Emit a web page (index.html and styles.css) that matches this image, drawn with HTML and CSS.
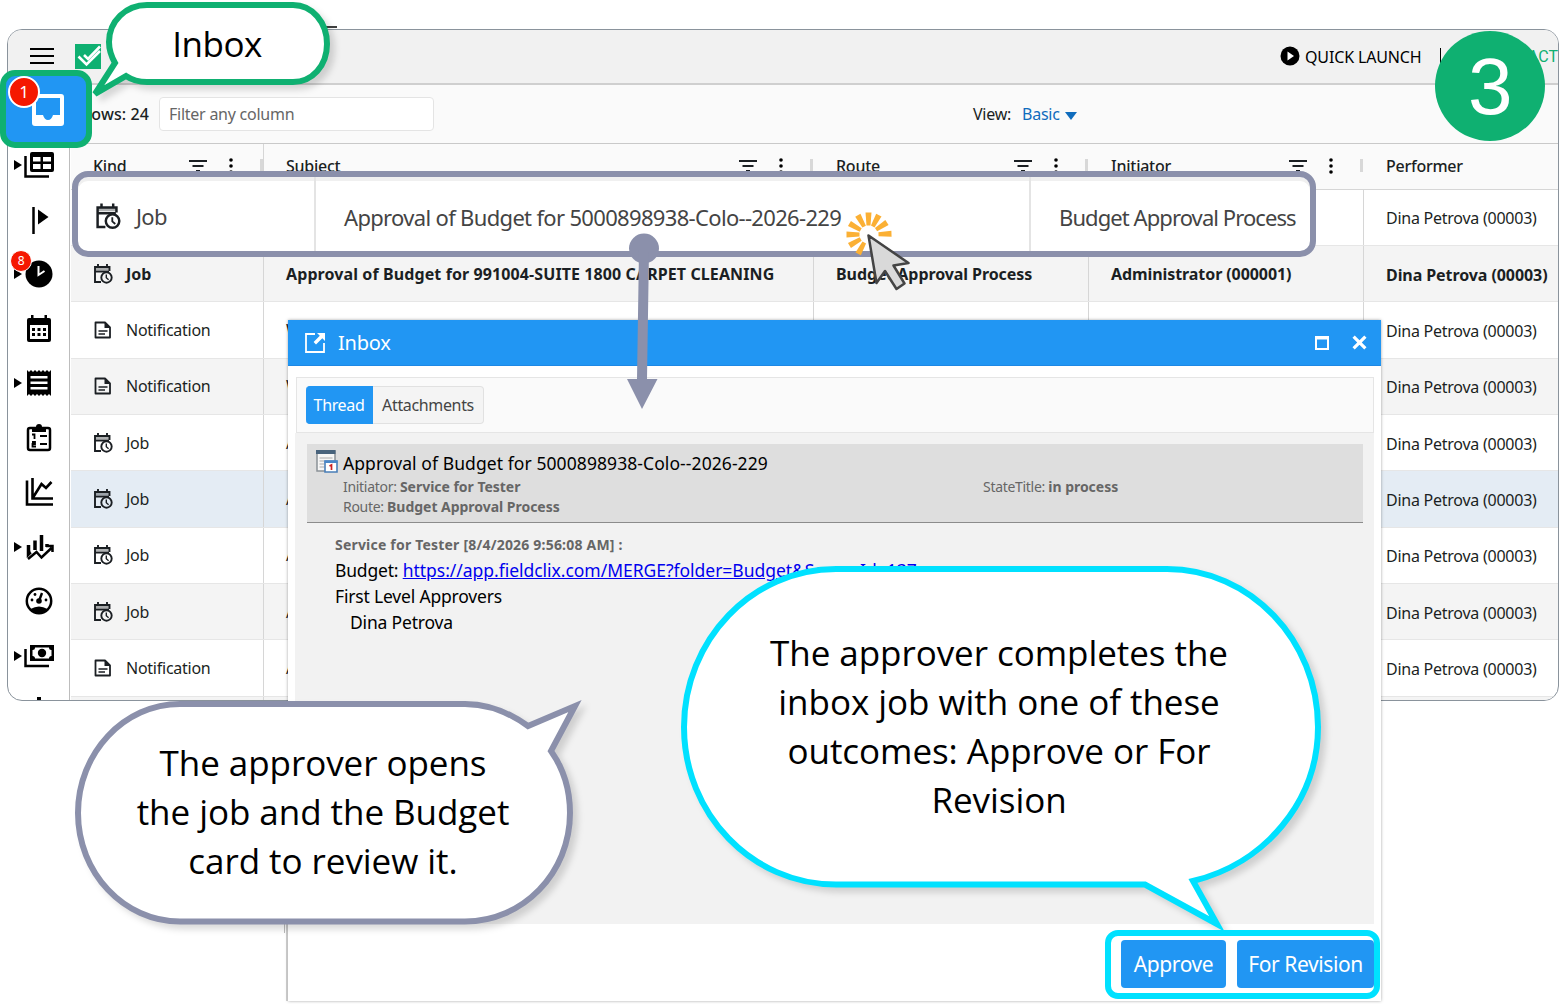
FILE: index.html
```html
<!DOCTYPE html>
<html lang="en">
<head>
    <meta charset="UTF-8">
    <meta name="viewport" content="width=device-width, initial-scale=1.0">
    <title>Inbox</title>
    <link rel="stylesheet" href="styles.css">
</head>
<body>
    <svg class="defs" width="0" height="0">
        <symbol id="i-job" viewBox="0 0 20 22">
            <path d="M8 19H2V4h14.500v4M2 8.500h14M5 1v3M14 1v3" fill="none" stroke="currentColor" stroke-width="1.900"/>
            <path d="M2 4h14.500v3H2z" fill="currentColor" opacity=".35"/>
            <circle cx="13.500" cy="14.500" r="5.200" fill="none" stroke="currentColor" stroke-width="1.900"/>
            <path d="M13.300 11.500v3.300l2.300 2" fill="none" stroke="currentColor" stroke-width="1.400"/>
        </symbol>
        <symbol id="i-note" viewBox="0 0 20 20">
            <path d="M2.500 2.500h9.500l5 5v10H2.500z" fill="none" stroke="currentColor" stroke-width="1.800" stroke-linejoin="round"/>
            <path d="M11.500 2v6H17z" fill="currentColor"/>
            <path d="M5.500 11h9M5.500 14h6.500" stroke="currentColor" stroke-width="1.500"/>
        </symbol>
        <symbol id="i-filter" viewBox="0 0 18 12">
            <path d="M0 1h18M3.500 6h11M7 11h4" stroke="currentColor" stroke-width="1.800"/>
        </symbol>
        <symbol id="i-dots" viewBox="0 0 4 16">
            <circle cx="2" cy="2" r="1.800"/><circle cx="2" cy="8" r="1.800"/><circle cx="2" cy="14" r="1.800"/>
        </symbol>
    </svg>

    <div class="app">
        <header class="topbar">
            <svg class="menu" viewBox="0 0 24 18"><path d="M0 2h24M0 9h24M0 16h24" stroke="#000" stroke-width="2.200"/></svg>
            <svg class="logo" viewBox="0 0 26 25"><path d="M0 0h26v25H0z" fill="#0fb071"/><path d="M3.500 12.500l8 8L25 7M9 11l4 4L25 2.500" fill="none" stroke="#fff" stroke-width="2.600"/></svg>
            <div class="quick">
                <svg viewBox="0 0 20 20"><circle cx="10" cy="10" r="9.500"/><path d="M7.500 5.500L14 10l-6.500 4.500z" fill="#fff"/></svg>
                <span>QUICK LAUNCH</span>
            </div>
            <div class="contact">CONTACT</div>
        </header>
        <div class="main">
            <nav class="sidebar">
                <div class="item inbox"></div>
                <div class="item has-sub"><svg viewBox="0 0 30 30"><path d="M1.500 6v20.500H25" fill="none" stroke="#000" stroke-width="2.500"/><path fill-rule="evenodd" d="M8 2h20a2 2 0 012 2v16a2 2 0 01-2 2H8a2 2 0 01-2-2V4a2 2 0 012-2zM9 7v4.500h7.500V7zM19 7v4.500h8V7zM9 14v5h7.500v-5zM19 14v5h8v-5z"/></svg></div>
                <div class="item"><svg viewBox="0 0 30 30"><path d="M9.500 2v27" stroke="#000" stroke-width="2.500"/><path d="M14 4.500l10.500 7.500L14 19.500z"/></svg></div>
                <div class="item has-sub"><svg viewBox="0 0 30 30"><circle cx="15" cy="15" r="13.500"/><path d="M14.500 7v9l6-4" fill="none" stroke="#fff" stroke-width="2"/></svg><b class="count">8</b></div>
                <div class="item"><svg viewBox="0 0 30 30"><path fill-rule="evenodd" d="M5 4h2V1h2.500v3h11V1H23v3h2a2 2 0 012 2v20a2 2 0 01-2 2H5a2 2 0 01-2-2V6a2 2 0 012-2zM6 11v14h18V11z"/><path d="M8 15.500h3m2.500 0h3m2.500 0h3M8 20.500h3m2.500 0h3m2.500 0h3" stroke="#000" stroke-width="3"/></svg></div>
                <div class="item has-sub"><svg viewBox="0 0 30 30"><path fill-rule="evenodd" d="M3 2l2 2 2-2 2 2 2-2 2 2 2-2 2 2 2-2 2 2 2-2 2 2 2-2v26l-2-2-2 2-2-2-2 2-2-2-2 2-2-2-2 2-2-2-2 2-2-2-2 2zM6.500 8v2.500h17V8zM6.500 13.500V16h17v-2.500zM6.500 19v2.500h17V19z"/></svg></div>
                <div class="item"><svg viewBox="0 0 30 30"><rect x="4" y="5" width="22" height="22" rx="2" fill="none" stroke="#000" stroke-width="2.500"/><path d="M8 4h4a3 3 0 016 0h4v5H8z"/><path d="M16 13h7M16 21h7M8 11.500h2.500V16M8 19h3v2H8.500v2.500H12" fill="none" stroke="#000" stroke-width="1.800"/></svg></div>
                <div class="item"><svg viewBox="0 0 30 30"><path d="M3 3.500v24h26M8.500 1v20.500H29M9 20.500L17.500 7l4.500 4 5.500-6" fill="none" stroke="#000" stroke-width="2.600"/></svg></div>
                <div class="item has-sub"><svg viewBox="0 0 30 30"><path d="M4.500 13v9l2-2M11 8.500V18M17.500 3v16M23 12v3" stroke="#000" stroke-width="3.500"/><path d="M4 27l8.500-7 5 5.500 10-9.500M22 14h6.500v6" fill="none" stroke="#000" stroke-width="2.500"/></svg></div>
                <div class="item"><svg viewBox="0 0 30 30"><circle cx="15" cy="15" r="12.200" fill="none" stroke="#000" stroke-width="2.500"/><path d="M6.500 23q8.500-5 17 0-3 5-8.500 5t-8.500-5z"/><circle cx="15" cy="15" r="2.800"/><path d="M15 15l3-8" stroke="#000" stroke-width="2.400"/><circle cx="8" cy="14" r="1.400"/><circle cx="22" cy="14" r="1.400"/><circle cx="11" cy="8.500" r="1.400"/></svg></div>
                <div class="item has-sub"><svg viewBox="0 0 30 30"><path d="M1.500 8v17H25" fill="none" stroke="#000" stroke-width="2.500"/><path fill-rule="evenodd" d="M6 4h24v16H6zM11 6.500q0 2.500-2.500 2.500v6q2.500 0 2.500 2.500h14q0-2.500 2.500-2.500V9Q25 9 25 6.500z"/><circle cx="18" cy="12" r="4.200"/></svg></div>
                <div class="item"><svg viewBox="0 0 30 30"><path d="M15 2v12" stroke="#000" stroke-width="4"/></svg></div>
            </nav>
            <section class="grid">
                <div class="toolbar">
                    <span class="rows">Rows: 24</span>
                    <div class="filter">Filter any column</div>
                    <span class="view">View:</span>
                    <span class="basic">Basic</span>
                </div>
                <div class="row head">
                    <div class="cell">Kind<svg class="fi"><use href="#i-filter"/></svg><svg class="dots"><use href="#i-dots"/></svg></div>
                    <div class="cell">Subject<svg class="fi"><use href="#i-filter"/></svg><svg class="dots"><use href="#i-dots"/></svg></div>
                    <div class="cell">Route<svg class="fi"><use href="#i-filter"/></svg><svg class="dots"><use href="#i-dots"/></svg></div>
                    <div class="cell">Initiator<svg class="fi"><use href="#i-filter"/></svg><svg class="dots"><use href="#i-dots"/></svg></div>
                    <div class="cell">Performer</div>
                </div>
                <div class="row"><div class="cell"></div><div class="cell"></div><div class="cell"></div><div class="cell"></div><div class="cell">Dina Petrova (00003)</div></div>
                <div class="row alt unread"><div class="cell"><svg class="job"><use href="#i-job"/></svg>Job</div><div class="cell long">Approval of Budget for 991004-SUITE 1800 CARPET CLEANING</div><div class="cell">Budget Approval Process</div><div class="cell">Administrator (000001)</div><div class="cell">Dina Petrova (00003)</div></div>
                <div class="row"><div class="cell"><svg class="note"><use href="#i-note"/></svg>Notification</div><div class="cell">W</div><div class="cell"></div><div class="cell"></div><div class="cell">Dina Petrova (00003)</div></div>
                <div class="row alt"><div class="cell"><svg class="note"><use href="#i-note"/></svg>Notification</div><div class="cell">W</div><div class="cell"></div><div class="cell"></div><div class="cell">Dina Petrova (00003)</div></div>
                <div class="row"><div class="cell"><svg class="job"><use href="#i-job"/></svg>Job</div><div class="cell">A</div><div class="cell"></div><div class="cell"></div><div class="cell">Dina Petrova (00003)</div></div>
                <div class="row selected"><div class="cell"><svg class="job"><use href="#i-job"/></svg>Job</div><div class="cell">A</div><div class="cell"></div><div class="cell"></div><div class="cell">Dina Petrova (00003)</div></div>
                <div class="row"><div class="cell"><svg class="job"><use href="#i-job"/></svg>Job</div><div class="cell">A</div><div class="cell"></div><div class="cell"></div><div class="cell">Dina Petrova (00003)</div></div>
                <div class="row alt"><div class="cell"><svg class="job"><use href="#i-job"/></svg>Job</div><div class="cell">A</div><div class="cell"></div><div class="cell"></div><div class="cell">Dina Petrova (00003)</div></div>
                <div class="row"><div class="cell"><svg class="note"><use href="#i-note"/></svg>Notification</div><div class="cell">A</div><div class="cell"></div><div class="cell"></div><div class="cell">Dina Petrova (00003)</div></div>
                <div class="row alt"><div class="cell"></div><div class="cell"></div><div class="cell"></div><div class="cell"></div><div class="cell"></div></div>
            </section>
        </div>
    </div>

    <div class="dialog">
        <div class="title">
            <svg class="open" viewBox="0 0 22 22"><path d="M11 2H2v18h18v-9" fill="none" stroke="#fff" stroke-width="1.800"/><path d="M13 1h8v8l-2.700-2.700-6.300 6.200-2.400-2.400 6.200-6.300z" fill="#fff"/></svg>
            <span>Inbox</span>
            <svg class="max" viewBox="0 0 14 14"><path d="M1 1h12v12H1zM0 2.500h14" fill="none" stroke="#fff" stroke-width="2"/></svg>
            <svg class="close" viewBox="0 0 14 14"><path d="M1.500 1.500l11 11M12.500 1.500l-11 11" stroke="#fff" stroke-width="3"/></svg>
        </div>
        <div class="tabs"><span class="tab active">Thread</span><span class="tab">Attachments</span></div>
        <div class="content">
            <div class="summary">
                <svg viewBox="0 0 22 24"><path d="M1 2h18v20H1z" fill="#f6f6f6" stroke="#8b9197" stroke-width="1.500"/><path d="M0 1h19.500v4H0z" fill="#48637c"/><path d="M3.500 9h13M3.500 12h5M3.500 15h5M3.500 18h5" stroke="#aaa" stroke-width="1.200"/><path d="M9 12h12v11H9z" fill="#fff" stroke="#4a7fb8" stroke-width="1.600"/><path d="M8.500 11.500h13V14h-13z" fill="#4a87c8"/><path d="M13.500 17l2-1v5" fill="none" stroke="#c22" stroke-width="1.700"/></svg>
                <div class="info">
                    <div class="subject">Approval of Budget for 5000898938-Colo--2026-229</div>
                    <div class="meta"><span>Initiator: <b>Service for Tester</b></span><span class="state">StateTitle: <b>in process</b></span></div>
                    <div class="meta">Route: <b>Budget Approval Process</b></div>
                </div>
            </div>
            <div class="message">
                <div class="from">Service for Tester [8/4/2026 9:56:08 AM] :</div>
                <div>Budget: <a href="#">https://app.fieldclix.com/MERGE?folder=Budget&amp;ScreenId=137</a></div>
                <div>First Level Approvers</div>
                <div class="indent">Dina Petrova</div>
            </div>
        </div>
    </div>

    <div class="zoomrow">
        <div class="z-kind"><svg><use href="#i-job"/></svg>Job</div>
        <div class="z-subject">Approval of Budget for 5000898938-Colo--2026-229</div>
        <div class="z-route">Budget Approval Process</div>
    </div>

    <div class="inbox-tile">
        <svg viewBox="0 0 32 32"><path fill-rule="evenodd" fill="#fff" d="M3 0h26a3 3 0 013 3v26a3 3 0 01-3 3H3a3 3 0 01-3-3V3a3 3 0 013-3zM4 4v17h7q1.500 5 5 5t5-5h7V4z"/></svg>
        <b>1</b>
    </div>

    <svg class="overlay" width="1559" height="1004" viewBox="0 0 1559 1004">
        <path d="M326 27h11" stroke="#000" stroke-width="1.500"/>
        <path d="M284.500 924v9" stroke="#bbb"/>
        <path d="M287 924v77" stroke="#bbb" stroke-width="1.500"/>
        <g fill="#fff" stroke-width="6" class="bubbles">
            <path stroke="#0fb071" d="M115 63C110 54 109 48 109 42 109 21 126 5 147 5H293C312 5 327 22 327 44S312 82 293 82H147C139 82 132 80 126 76L95 94z"/>
            <path stroke="#8b90ab" d="M180 704H465C489 704 510 713 528 726L575 706 551 751C563 768 570 790 570 813 570 873 523 921.500 465 921.500H180C124 921.500 78 873 78 813S124 704 180 704z"/>
            <path stroke="#00e1ff" d="M836 569H1167C1250 569 1318 640 1318 727 1318 802 1264 864 1193 881L1217 924 1145 884.500H836C752 884.500 684 814 684 727S752 569 836 569z"/>
        </g>
        <g fill="#8b90ab"><circle cx="644" cy="248.500" r="15"/><path d="M639 250h10l-2 129h10.500L642 409l-15-30h10z"/></g>
        <g fill="#fbb034" transform="translate(868.500 234.500)">
            <path d="M-3-22h6L2-9h-4z"/>
            <path d="M-3-22h6L2-9h-4z" transform="rotate(28)"/><path d="M-3-22h6L2-9h-4z" transform="rotate(57)"/>
            <path d="M-3-23h6L2-10h-4z" transform="rotate(88)"/><path d="M-3-22h6L2-9h-4z" transform="rotate(-29)"/>
            <path d="M-3-22h6L2-9h-4z" transform="rotate(-60)"/><path d="M-3-22h6L2-9h-4z" transform="rotate(-90)"/>
            <path d="M-3-22h6L2-9h-4z" transform="rotate(-120)"/><path d="M-3-22h6L2-9h-4z" transform="rotate(-152)"/>
        </g>
        <path d="M868.500 235.500l40 27.500-15 2.500 11 18-8 5.500-11.500-18-8.500 12z" fill="#d9d9d9" stroke="#444" stroke-width="2.500" stroke-linejoin="round"/>
    </svg>
    <div class="say say-inbox">Inbox</div>
    <div class="say say-open">The approver opens<br>the job and the Budget<br>card to review it.</div>
    <div class="say say-done">The approver completes the<br>inbox job with one of these<br>outcomes: Approve or For<br>Revision</div>
    <div class="step">3</div>
    <div class="actions"><button>Approve</button><button class="revision">For Revision</button></div>
</body>
</html>
```
FILE: styles.css
```css
* {
    box-sizing: border-box;
}
body {
    position: relative;
    margin: 0;
    width: 1559px;
    height: 1004px;
    overflow: hidden;
    background: #fff;
    font-family: "Noto Sans", "Open Sans", sans-serif;
    font-size: 16px;
    letter-spacing: -0.25px;
    color: #1b1f23;
    white-space: nowrap;
}
svg {
    display: block;
    flex: none;
}
.defs {
    position: absolute;
}
.app {
    margin: 29px 0 0 7px;
    height: 672px;
    border: 1px solid #8a939c;
    border-radius: 15px;
    overflow: hidden;
    position: absolute;
    width: 1552px;
}
.topbar {
    height: 55px;
    display: flex;
    align-items: center;
    background: #f1f1f1;
    border-bottom: 2px solid #cfcfcf;
    padding: 0 0 1px 22px;
    color: #000;
}
.menu {
    width: 24px;
    height: 18px;
}
.logo {
    width: 26px;
    height: 25px;
    margin-left: 21px;
}
.quick {
    display: flex;
    align-items: center;
    gap: 5px;
    margin-left: 1179px;
    width: 161px;
    height: 17px;
    border-right: 1px solid #000;
    letter-spacing: -0.15px;
}
.quick svg {
    width: 20px;
    height: 20px;
}
.quick span {
    padding-top: 1px;
}
.contact {
    margin-left: auto;
    font-family: Roboto, sans-serif;
    color: #0fb071;
    letter-spacing: 0;
}
.main {
    display: flex;
}
.sidebar {
    width: 62px;
    height: 616px;
    border-right: 1px solid #bdbdbd;
    flex: none;
    overflow: hidden;
}
.item {
    height: 54.5px;
    display: flex;
    align-items: center;
    justify-content: center;
    position: relative;
}
.item.inbox {
    height: 53px;
}
.item svg {
    width: 30px;
    height: 30px;
}
.has-sub::before {
    content: "";
    position: absolute;
    left: 6px;
    border-left: 8px solid #000;
    border-top: 5px solid transparent;
    border-bottom: 5px solid transparent;
}
.count {
    position: absolute;
    left: 2px;
    top: 3px;
    width: 22px;
    height: 22px;
    border: 1px solid #fff;
    border-radius: 50%;
    background: #f51800;
    color: #fff;
    font-size: 12px;
    line-height: 20px;
    font-weight: 400;
    text-align: center;
}
.grid {
    flex: 1;
    padding-left: 1px;
}
.toolbar {
    height: 59px;
    margin-left: -1px;
    background: #fafafa;
    border-bottom: 1px solid #c9c9c9;
    display: flex;
    align-items: center;
}
.rows {
    width: 89px;
    text-align: right;
    margin-left: -10px;
    font-weight: 500;
    letter-spacing: 0.1px;
}
.filter {
    width: 275px;
    height: 34px;
    margin-left: 10px;
    padding-left: 9px;
    line-height: 32px;
    border: 1px solid #e4e4e4;
    border-radius: 4px;
    background: #fff;
    color: #666;
}
.view {
    width: 49px;
    margin-left: 539px;
}
.basic {
    color: #0f6cbd;
    display: flex;
    align-items: center;
    gap: 5px;
}
.basic::after {
    content: "";
    border-top: 8px solid #0f6cbd;
    border-left: 6px solid transparent;
    border-right: 6px solid transparent;
    margin-top: 3px;
}
.row {
    display: grid;
    grid-template-columns: 193px 550px 275px 275px 1fr;
    height: 56.35px;
    border-bottom: 1px solid #e6e6e6;
}
.cell {
    display: flex;
    align-items: center;
    padding-left: 22px;
    border-right: 1px solid #d6d6d6;
    overflow: hidden;
}
.cell:last-child {
    border-right: 0;
    padding-top: 2px;
}
.cell .job {
    width: 20px;
    height: 22px;
    margin-right: 13px;
}
.cell .note {
    width: 20px;
    height: 20px;
    margin-right: 13px;
}
.head {
    height: 45.5px;
    background: #fafafa;
    border-color: #d6d6d6;
    font-weight: 500;
}
.head .cell {
    border-color: transparent;
    padding-bottom: 1px;
}
.head .cell:first-child {
    border-color: #d6d6d6;
}
.head .cell:not(:last-child)::after {
    content: "";
    width: 3px;
    height: 13px;
    background: #d8d8d8;
}
.head .cell:last-child {
    padding-top: 0;
}
.fi {
    width: 18px;
    height: 12px;
    margin-left: auto;
}
.dots {
    width: 4px;
    height: 16px;
    margin: 0 27px 0 22px;
}
.alt {
    background: #f4f4f4;
}
.selected {
    background: #e4ecf4;
}
.unread {
    font-weight: 700;
    letter-spacing: -0.08px;
}
.unread .long {
    letter-spacing: 0.1px;
}
.dialog {
    position: absolute;
    left: 288px;
    top: 320px;
    width: 1093px;
    height: 681px;
    background: #fff;
    box-shadow: 0 0 3px rgba(0, 0, 0, 0.35);
}
.title {
    height: 46px;
    padding: 0 14px 0 16px;
    display: flex;
    align-items: center;
    background: #2196f3;
    border-bottom: 1px solid #1e88e5;
    color: #fff;
    font-size: 20px;
    letter-spacing: -0.2px;
}
.open {
    width: 22px;
    height: 22px;
    margin-right: 12px;
}
.max {
    width: 14px;
    height: 14px;
    margin-left: auto;
}
.close {
    width: 15px;
    height: 15px;
    margin-left: 23px;
}
.tabs {
    height: 56px;
    margin: 11px 7px 0 8px;
    padding: 8px 9px;
    display: flex;
    background: #fafafa;
    border: 1px solid #e5e5e5;
    letter-spacing: -0.35px;
}
.tab {
    height: 38px;
    line-height: 36px;
    width: 111px;
    text-align: center;
    background: #f4f4f4;
    border: 1px solid #e1e1e1;
    border-left: 0;
    border-radius: 0 4px 4px 0;
    color: #444;
}
.tab.active {
    width: 67px;
    background: #2196f3;
    border-color: #2196f3;
    border-radius: 4px 0 0 4px;
    color: #fff;
}
.content {
    height: 491px;
    margin: 0 7px;
    padding: 11px 11px 0 12px;
    background: #f2f2f2;
}
.summary {
    height: 79px;
    display: flex;
    background: #dedede;
    border-bottom: 1px solid #8c8c8c;
    padding: 5px 9px;
}
.summary svg {
    width: 22px;
    height: 24px;
    margin-right: 5px;
}
.info {
    flex: 1;
}
.subject {
    font-size: 17.5px;
    line-height: 28px;
    letter-spacing: 0.08px;
    color: #000;
}
.meta {
    display: flex;
    font-size: 14px;
    line-height: 20px;
    letter-spacing: -0.3px;
    color: #666;
    white-space: pre;
}
.meta b {
    letter-spacing: -0.03px;
}
.state {
    margin-left: auto;
    width: 371px;
}
.message {
    padding: 9px 0 0 28px;
    font-size: 17.5px;
    line-height: 26px;
    letter-spacing: -0.18px;
    color: #000;
}
.from {
    font-size: 14px;
    height: 25px;
    font-weight: 700;
    letter-spacing: 0.2px;
    color: #666;
}
.message a {
    color: #00e;
    letter-spacing: -0.03px;
}
.indent {
    padding-left: 15px;
}
.zoomrow {
    position: absolute;
    left: 72px;
    top: 171px;
    width: 1244px;
    height: 86px;
    display: flex;
    align-items: stretch;
    line-height: 80px;
    background: #fff;
    border: 6px solid #8b90ab;
    border-radius: 16px;
    color: #444;
    font-size: 22px;
    box-shadow: inset 0 4px 0 #f0f0f0;
    letter-spacing: -0.67px;
}
.z-kind {
    display: flex;
    align-items: center;
    width: 238px;
    padding: 4px 0 0 17px;
    border-right: 2px solid #e4e4e4;
}
.z-kind svg {
    width: 26px;
    height: 29px;
    margin-right: 15px;
    color: #1b1f23;
}
.z-subject {
    width: 715px;
    padding-left: 28px;
    border-right: 2px solid #e4e4e4;
}
.z-route {
    padding-left: 28px;
    letter-spacing: -0.92px;
}
.inbox-tile {
    position: absolute;
    left: 0;
    top: 70px;
    width: 92px;
    height: 78px;
    background: #2196f3;
    border: 6px solid #0fb071;
    border-radius: 15px;
}
.inbox-tile svg {
    width: 32px;
    height: 32px;
    margin: 18px 0 0 26px;
}
.inbox-tile b {
    position: absolute;
    left: 2px;
    top: 0;
    width: 32px;
    height: 32px;
    border: 2px solid #fff;
    border-radius: 50%;
    background: #f51800;
    color: #fff;
    font-size: 17px;
    font-weight: 400;
    line-height: 28px;
    text-align: center;
}
.overlay {
    position: absolute;
    left: 0;
    top: 0;
}
.bubbles {
    filter: drop-shadow(5px 5px 3px rgba(0, 0, 0, 0.14));
}
.say {
    position: absolute;
    text-align: center;
    font-family: "Open Sans", sans-serif;
    font-size: 35px;
    line-height: 49px;
    letter-spacing: -0.05px;
    color: #000;
}
.say-inbox {
    left: 117px;
    top: 19px;
    width: 200px;
    letter-spacing: -0.5px;
}
.say-open {
    left: 83px;
    top: 738px;
    width: 480px;
}
.say-done {
    left: 689px;
    top: 628px;
    width: 620px;
}
.step {
    position: absolute;
    left: 1435px;
    top: 31px;
    width: 110px;
    height: 110px;
    border-radius: 50%;
    background: #0fb071;
    color: #fff;
    font: 80px/112px "Liberation Sans", Arial, sans-serif;
    text-align: center;
}
.actions {
    position: absolute;
    left: 1105px;
    top: 930px;
    width: 275px;
    height: 69px;
    display: flex;
    gap: 11px;
    padding: 4px 0 0 10px;
    background: #fff;
    border: 6px solid #00e1ff;
    border-radius: 13px;
}
.actions button {
    width: 105px;
    height: 48px;
    flex: none;
    padding: 0;
    border: 0;
    border-radius: 4px;
    background: #2196f3;
    color: #fff;
    font-family: inherit;
    font-size: 21px;
    letter-spacing: -0.4px;
}
.actions .revision {
    width: 137px;
}
```
